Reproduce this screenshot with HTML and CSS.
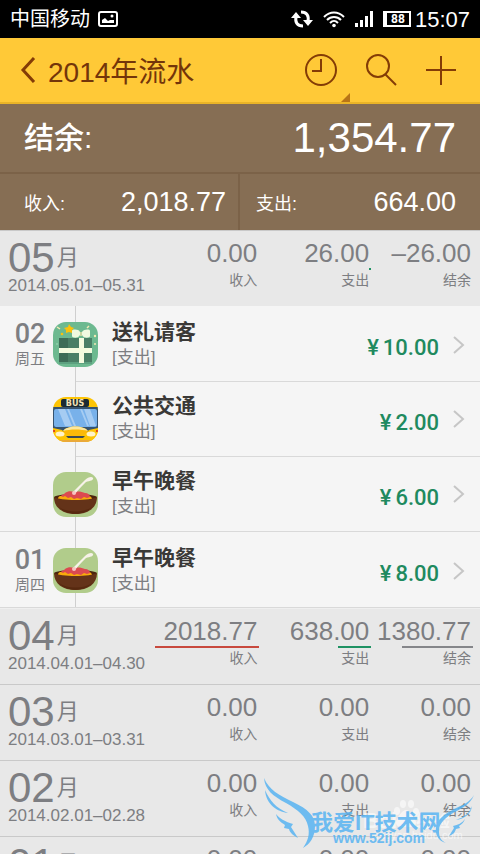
FILE: index.html
```html
<!DOCTYPE html>
<html lang="zh-CN">

<head>
  <meta charset="UTF-8">
  <meta name="viewport" content="width=device-width, initial-scale=1.0">
  <title>2014年流水</title>
  <link rel="stylesheet" href="styles.css">
</head>

<body>
  <!-- Shared icons -->
  <svg class="sprite" aria-hidden="true">
    <symbol id="icon-gift" viewBox="0 0 45 45">
      <rect width="45" height="45" rx="13" fill="#6db990" />
      <rect x="6" y="16" width="33" height="25" fill="#4a7f66" />
      <path d="M6 16h9v10H6zM6 31h9v10H6z" fill="#3d6c57" />
      <path d="M6 40h33v2H6z" fill="#5da180" />
      <path d="M6 26h33v5H6zM26 16h5v25h-5z" fill="#f4fbdf" />
      <path d="M27 13c-2 4-8 3-8 1V9c0-2 7-2 8 1h2c2-3 8-3 8-1v5c0 2-6 3-8-1z" fill="#f0fae0" />
      <path d="M27 10h2v4h-2z" fill="#c9d7a2" />
      <path d="M16 2l2 3 3 1-2 2v3l-3-1-3 1v-3l-2-2 4-1z" fill="#fbc20b" />
      <circle cx="9" cy="12" r="1.3" fill="#fbc20b" />
      <path d="M4 5l3 2M34 6l2-2" stroke="#f4e9b5" stroke-width="1.5" />
      <circle cx="42" cy="14" r="1.2" fill="#f4e9b5" />
      <circle cx="42" cy="22" r="1" fill="#f4e9b5" />
      <circle cx="4" cy="22" r=".8" fill="#a9dcbe" />
    </symbol>
    <symbol id="icon-bus" viewBox="0 0 45 45">
      <clipPath id="bus-shape"><rect width="45" height="45" rx="13" /></clipPath>
      <g clip-path="url(#bus-shape)">
        <rect width="45" height="45" fill="#fdc404" />
        <rect x="8" y="2" width="28" height="8" rx="2" fill="#1c2b33" />
        <text x="22" y="9" text-anchor="middle" class="bus-sign">BUS</text>
        <rect y="10" width="45" height="25" fill="#36536f" />
        <rect x="1" y="12" width="43" height="18" rx="2" fill="#78b1ea" />
        <path d="M5 12h7l7 17h-7zM14 12h2l7 17h-2zM31 12h6l6 17h-6zM27 12h2l7 17h-2z" fill="#a6ccf2" />
        <path d="M0 31l9 2 5 5h17l5-5 9-2v14H0z" fill="#fdc404" />
        <path d="M10 34c4-6 21-6 25 0-3 7-22 7-25 0z" fill="#fbb909" />
        <path d="M10 34c4-6 21-6 25 0-7-2-18-2-25 0z" fill="#fde79d" />
        <path d="M13 39h19l-2 2H15z" fill="#3b4a55" />
        <ellipse cx="7" cy="37" rx="4.500" ry="2.500" fill="#fff3cb" />
        <ellipse cx="38" cy="37" rx="4.500" ry="2.500" fill="#fff3cb" />
        <path d="M0 33h2v2H0zM43 33h2v2h-2z" fill="#e2421f" />
        <path d="M0 43h45v2H0z" fill="#eaa93a" />
      </g>
    </symbol>
    <symbol id="icon-meal" viewBox="0 0 45 45">
      <rect width="45" height="45" rx="13" fill="#b1cc8b" />
      <path d="M1 25c4-4 39-4 43 0l-2 5H3z" fill="#4b240f" />
      <path d="M5 27c0-4 4-3 6-3 2-3 6-2 9-2 5-2 9 0 12 1 4 0 7 2 7 4-6 3-28 3-34 0z" fill="#f9ab0b" />
      <path d="M8 24c1-2 3-1 4-3 3-2 6-2 9-1 5-1 8 0 11 1 3 0 5 2 5 4l-3 1-3-1-3 2-4-1-3 1-3-2-3 1-3-2-2 1z" fill="#dc4a50" />
      <path d="M1 25c0 11 9 17 21.500 17S44 36 44 25c-6 4-37 4-43 0z" fill="#643319" />
      <path d="M6 35c8 6 25 6 33 0-7 9-26 9-33 0z" fill="#57290f" />
      <path d="M20 20c4-4 8-8 12-12 3-3 7-4 8-2 1 2-3 3-7 4-4 4-8 8-11 12z" fill="#f7f2e9" />
      <circle cx="21" cy="21" r="2" fill="#f6c5c1" />
    </symbol>
    <symbol id="icon-next" viewBox="0 0 12 18">
      <path d="M1 1l9 8-9 8" fill="none" stroke="#c6c6c6" stroke-width="2" />
    </symbol>
  </svg>

  <div class="app">
    <div class="status-bar">
      <span>中国移动</span>
      <svg class="status-picture" width="20" height="16" viewBox="0 0 20 16">
        <rect x="1" y="1" width="18" height="14" rx="2" fill="none" stroke="#fff" stroke-width="2" />
        <path d="M4 12V9l3-2 3 3 2-1h4v3z" fill="#fff" />
        <circle cx="14" cy="5" r="1.500" fill="#fff" />
      </svg>
      <div class="status-icons">
        <svg width="22" height="18" viewBox="0 0 22 18">
          <path d="M12 16C6 16 4 12 5 7M10 2c6 0 8 4 7 9" fill="none" stroke="#fff" stroke-width="3" />
          <path d="M0 8l5-6 5 6zM12 10l5 6 5-6z" fill="#fff" />
        </svg>
        <svg width="22" height="18" viewBox="0 0 22 18">
          <path d="M1 7c6-6 14-6 20 0M4 10c4-4 10-4 14 0M7 13c3-3 5-3 8 0" fill="none" stroke="#fff" stroke-width="2" />
          <circle cx="11" cy="15.500" r="1.800" fill="#fff" />
        </svg>
        <svg width="18" height="16" viewBox="0 0 18 16">
          <path d="M0 12h3v4H0zM5 9h3v7H5zM10 5h3v11h-3zM15 0h3v16h-3z" fill="#fff" />
        </svg>
        <span class="battery">88</span>
        <span class="clock">15:07</span>
      </div>
    </div>

    <header class="header">
      <button class="back" type="button" aria-label="返回">
        <svg width="16" height="26" viewBox="0 0 16 26">
          <path d="M14 1L3 13l11 12" fill="none" stroke="#843c06" stroke-width="3" />
        </svg>
      </button>
      <h1>2014年流水</h1>
      <button class="tool tool-time" type="button" aria-label="时间">
        <svg width="34" height="34" viewBox="0 0 34 34">
          <circle cx="17" cy="17" r="15" />
          <path d="M17 6v12H8" />
        </svg>
      </button>
      <button class="tool" type="button" aria-label="搜索">
        <svg width="34" height="34" viewBox="0 0 34 34">
          <circle cx="14" cy="13" r="11" />
          <path d="M21 21l11 11" />
        </svg>
      </button>
      <button class="tool" type="button" aria-label="添加">
        <svg width="34" height="34" viewBox="0 0 34 34">
          <path d="M17 3v29M2 17h30" />
        </svg>
      </button>
    </header>

    <section class="summary">
      <div class="balance">
        <span>结余:</span>
        <strong>1,354.77</strong>
      </div>
      <div class="totals">
        <div class="total">
          <span>收入:</span>
          <b>2,018.77</b>
        </div>
        <div class="total">
          <span>支出:</span>
          <b>664.00</b>
        </div>
      </div>
    </section>

    <main>
      <section class="month open">
        <div class="month-name">
          <h2>05<small>月</small></h2>
          <p>2014.05.01–05.31</p>
        </div>
        <div class="stat"><b>0.00</b><i class="bar"></i><span>收入</span></div>
        <div class="stat"><b>26.00</b><i class="bar expense" style="width: 2px"></i><span>支出</span></div>
        <div class="stat"><b>–26.00</b><i class="bar"></i><span>结余</span></div>
      </section>

      <section class="day">
        <div class="date"><b>02</b><span>周五</span></div>
        <ul class="entries">
          <li>
            <a class="entry" href="#">
              <svg class="category"><use href="#icon-gift" /></svg>
              <div class="info"><h3>送礼请客</h3><p>[支出]</p></div>
              <span class="amount"><span>¥</span>10.00</span>
              <svg class="next"><use href="#icon-next" /></svg>
            </a>
          </li>
          <li>
            <a class="entry" href="#">
              <svg class="category"><use href="#icon-bus" /></svg>
              <div class="info"><h3>公共交通</h3><p>[支出]</p></div>
              <span class="amount"><span>¥</span>2.00</span>
              <svg class="next"><use href="#icon-next" /></svg>
            </a>
          </li>
          <li>
            <a class="entry" href="#">
              <svg class="category"><use href="#icon-meal" /></svg>
              <div class="info"><h3>早午晚餐</h3><p>[支出]</p></div>
              <span class="amount"><span>¥</span>6.00</span>
              <svg class="next"><use href="#icon-next" /></svg>
            </a>
          </li>
        </ul>
      </section>

      <section class="day">
        <div class="date"><b>01</b><span>周四</span></div>
        <ul class="entries">
          <li>
            <a class="entry" href="#">
              <svg class="category"><use href="#icon-meal" /></svg>
              <div class="info"><h3>早午晚餐</h3><p>[支出]</p></div>
              <span class="amount"><span>¥</span>8.00</span>
              <svg class="next"><use href="#icon-next" /></svg>
            </a>
          </li>
        </ul>
      </section>

      <section class="month">
        <div class="month-name">
          <h2>04<small>月</small></h2>
          <p>2014.04.01–04.30</p>
        </div>
        <div class="stat"><b>2018.77</b><i class="bar income" style="width: 104px"></i><span>收入</span></div>
        <div class="stat"><b>638.00</b><i class="bar expense" style="width: 33px"></i><span>支出</span></div>
        <div class="stat"><b>1380.77</b><i class="bar rest" style="width: 71px"></i><span>结余</span></div>
      </section>

      <section class="month">
        <div class="month-name">
          <h2>03<small>月</small></h2>
          <p>2014.03.01–03.31</p>
        </div>
        <div class="stat"><b>0.00</b><i class="bar"></i><span>收入</span></div>
        <div class="stat"><b>0.00</b><i class="bar"></i><span>支出</span></div>
        <div class="stat"><b>0.00</b><i class="bar"></i><span>结余</span></div>
      </section>

      <section class="month">
        <div class="month-name">
          <h2>02<small>月</small></h2>
          <p>2014.02.01–02.28</p>
        </div>
        <div class="stat"><b>0.00</b><i class="bar"></i><span>收入</span></div>
        <div class="stat"><b>0.00</b><i class="bar"></i><span>支出</span></div>
        <div class="stat"><b>0.00</b><i class="bar"></i><span>结余</span></div>
      </section>

      <section class="month">
        <div class="month-name">
          <h2>01<small>月</small></h2>
          <p>2014.01.01–01.31</p>
        </div>
        <div class="stat"><b>0.00</b><i class="bar"></i><span>收入</span></div>
        <div class="stat"><b>0.00</b><i class="bar"></i><span>支出</span></div>
        <div class="stat"><b>0.00</b><i class="bar"></i><span>结余</span></div>
      </section>
    </main>

    <!-- Site mark over the list -->
    <svg class="watermark" width="224" height="84" viewBox="0 0 224 84">
      <g class="mark-baidu">
        <text x="107" y="58" class="mark-large">Bai</text>
        <text x="160" y="57" class="mark-small">经验</text>
        <text x="118" y="69" class="mark-url">jingyan.baidu.com</text>
        <ellipse cx="141" cy="41" rx="3" ry="4" />
        <ellipse cx="147" cy="34" rx="3" ry="4" />
        <ellipse cx="155" cy="34" rx="3" ry="4" />
        <ellipse cx="160" cy="42" rx="3" ry="4" />
        <path d="M150 40c4 0 9 8 10 12 0 6-6 5-10 5s-10 1-10-5c1-4 6-12 10-12z" />
      </g>
      <g class="mark-site">
        <path d="M8 8c5 12 15 17 29 24 15 7 22 14 22 24 0 11-5 18-12 22 5-7 7-14 5-22-2-10-10-16-22-23C17 26 9 20 8 8z" />
        <path d="M9 20c5 11 11 18 23 23-10-1-22-8-23-23z" />
        <path d="M20 44c4 5 8 7 17 10l-2 3 7 11c-5-3-8-5-9-9l-5-1 1-3c-5-3-8-6-9-11z" />
        <path d="M218 25c-4 10-12 13-21 18-11 7-15 13-14 19 0 6 3 9 7 11-8-2-11-9-10-15 1-9 9-14 18-19 9-4 16-7 20-14z" />
        <path d="M216 36c-3 8-8 11-16 14 7-1 15-5 16-14z" />
        <path d="M209 49c-3 4-7 6-12 7l1 2-5 8c5-2 6-4 7-7l4-1-1-2c3-2 5-4 6-7z" />
        <text x="55" y="60" class="mark-name">我爱IT技术网</text>
        <text x="77" y="73" class="mark-www">www.52ij.com</text>
      </g>
    </svg>
  </div>
</body>

</html>
```
FILE: styles.css
```css
* {
  box-sizing: border-box;
}

body,
h1,
h2,
h3,
p,
ul {
  margin: 0;
  padding: 0;
}

body {
  font-family: "Liberation Sans", "Noto Sans CJK SC", sans-serif;
  background-color: #e8e8e8;
  color: #7d7e82;
}

ul {
  list-style: none;
}

b,
strong,
h1,
h2 {
  font-weight: normal;
}

button {
  border: none;
  padding: 0;
  background: none;
  cursor: pointer;
}

svg {
  display: block;
  flex: none;
}

.sprite {
  position: absolute;
  width: 0;
  height: 0;
}

.app {
  position: relative;
  height: 100vh;
  overflow: hidden;
}

/* Status bar */
.status-bar {
  display: flex;
  align-items: center;
  height: 38px;
  padding: 0 10px;
  background-color: #000;
  color: #fff;
  font-size: 20px;
  line-height: 24px;
}

.status-picture {
  margin-left: 8px;
}

.status-icons {
  display: flex;
  align-items: center;
  gap: 10px;
  margin-left: auto;
}

.battery {
  width: 28px;
  height: 16px;
  border: 2px solid #fff;
  border-left-width: 4px;
  font-family: Roboto, sans-serif;
  font-size: 12px;
  font-weight: bold;
  line-height: 12px;
  text-align: center;
}

.clock {
  margin-left: -6px;
  padding-top: 2px;
  font-size: 22px;
}

/* Header */
.header {
  display: flex;
  align-items: center;
  gap: 26px;
  height: 66px;
  padding: 0 22px 0 20px;
  border-bottom: 2px solid #eab428;
  background-color: #ffc937;
}

.header h1 {
  flex: 1;
  margin-left: -14px;
  color: #73350a;
  font-size: 28px;
}

.tool {
  display: flex;
  align-items: center;
  align-self: stretch;
}

.tool svg {
  fill: none;
  stroke: #843c06;
  stroke-width: 2;
}

.tool-time {
  position: relative;
}

.tool-time::after {
  content: '';
  position: absolute;
  right: -12px;
  bottom: 0;
  border-left: 9px solid transparent;
  border-bottom: 9px solid #b87517;
}

/* Summary */
.summary {
  background-color: #866e54;
  color: #fff;
}

.balance {
  display: flex;
  align-items: center;
  justify-content: space-between;
  height: 70px;
  padding: 0 24px;
  border-bottom: 2px solid #7b6248;
}

.balance span {
  font-size: 30px;
  font-weight: 500;
  line-height: 40px;
}

.balance strong {
  font-size: 42px;
}

.totals {
  display: grid;
  grid-template-columns: 1fr 1fr;
}

.total {
  display: flex;
  align-items: center;
  justify-content: space-between;
  height: 56px;
  padding: 0 12px 0 24px;
}

.total + .total {
  padding: 0 24px 0 16px;
}

.total:first-child {
  border-right: 2px solid #7b6248;
}

.total span {
  font-size: 18px;
}

.total b {
  font-size: 27px;
}

/* Months */
.month {
  display: grid;
  grid-template-columns: 29fr 20fr 22fr 20fr;
  height: 76px;
  padding: 7px 9px 0 8px;
  border-bottom: 1px solid #c9c9c9;
  background-color: #e8e8e8;
}

.month.open {
  border-top: 1px solid #c9c9c9;
  border-bottom: none;
}

.day + .month {
  height: 77px;
  border-top: 1px solid #efefef;
}

.month h2 {
  display: flex;
  align-items: center;
  height: 40px;
  font-size: 42px;
  line-height: 40px;
}

.month small {
  margin-left: 2px;
  font-size: 22px;
}

.month p {
  font-size: 17px;
  line-height: 16px;
  white-space: nowrap;
}

.stat {
  display: flex;
  flex-direction: column;
  align-items: flex-end;
}

.stat b {
  font-size: 26px;
  line-height: 30px;
}

.stat span {
  font-size: 14px;
  line-height: 20px;
}

.bar {
  height: 2px;
  margin-right: -2px;
}

.income {
  background-color: #c8493d;
}

.expense {
  background-color: #1f9263;
}

.rest {
  background-color: #85868a;
}

/* Days */
.day {
  display: flex;
  border-bottom: 1px solid #d9d9d9;
  background-color: #f5f5f5;
}

.date {
  display: flex;
  flex-direction: column;
  align-items: center;
  width: 75px;
  padding: 13px 15px 0 0;
}

.date b {
  font-family: Roboto, sans-serif;
  font-size: 27px;
  font-weight: 500;
  line-height: 30px;
}

.date span {
  font-size: 15px;
  line-height: 20px;
}

.entries {
  flex: 1;
  border-left: 1px solid #cfcfcf;
}

.entries li + li {
  border-top: 1px solid #d9d9d9;
}

.entry {
  display: flex;
  align-items: center;
  height: 75px;
  padding: 2px 15px 0 0;
  color: inherit;
  text-decoration: none;
}

.entries li + li .entry {
  height: 74px;
  padding-top: 0;
}

.category {
  width: 45px;
  height: 45px;
  margin-left: -23px;
}

.bus-sign {
  fill: #f5e3b8;
  font-family: "DejaVu Sans", sans-serif;
  font-size: 8px;
  font-weight: bold;
}

.info {
  flex: 1;
  margin-left: 14px;
}

.info h3 {
  color: #3a3937;
  font-size: 21px;
  font-weight: bold;
  line-height: 26px;
}

.info p {
  font-size: 17px;
  line-height: 26px;
}

.amount {
  margin-top: 6px;
  color: #1f8a5f;
  font-family: Roboto, sans-serif;
  font-size: 22px;
  font-weight: 500;
}

.amount span {
  margin-right: 4px;
}

.next {
  width: 12px;
  height: 18px;
  margin-left: 14px;
}

/* Watermark */
.watermark {
  position: absolute;
  right: 0;
  bottom: 0;
  pointer-events: none;
}

.mark-baidu {
  fill: #fff;
  opacity: 0.6;
}

.mark-site {
  fill: #58b4f2;
  opacity: 0.85;
}

.mark-large {
  font-size: 22px;
  font-weight: bold;
}

.mark-small {
  font-size: 17px;
  font-weight: bold;
}

.mark-url {
  font-size: 11px;
}

.mark-name {
  font-size: 22px;
  font-weight: bold;
}

.mark-www {
  font-size: 14px;
  font-weight: bold;
}
```
